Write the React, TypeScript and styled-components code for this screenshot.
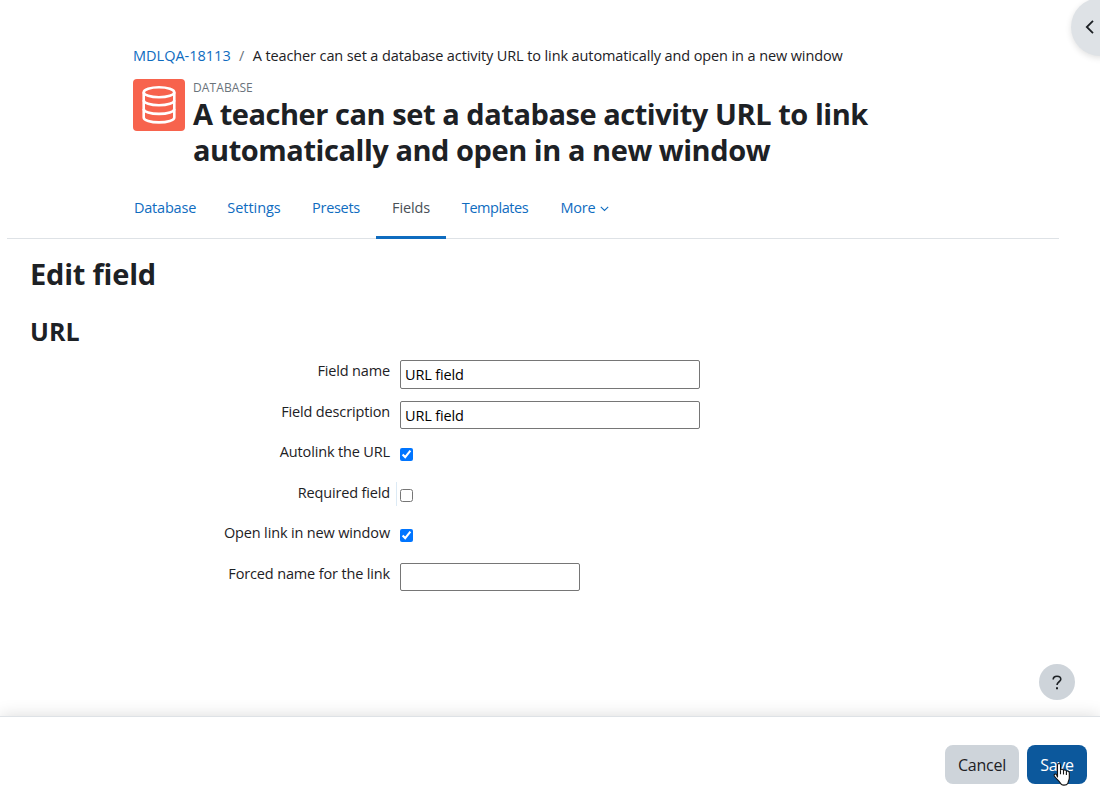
import styled, { createGlobalStyle } from 'styled-components';

const GlobalStyle = createGlobalStyle`
  * {
    box-sizing: border-box;
  }

  body {
    margin: 0;
    background: #fff;
    color: #1d2125;
    font-family: 'Open Sans', 'Noto Sans', sans-serif;
    font-size: 14.5px;
    overflow: hidden;
  }

  a {
    color: #0f6cbf;
    text-decoration: none;
  }
`;

const Page = styled.div`
  position: relative;
  display: flex;
  flex-direction: column;
  width: 1100px;
  height: 804px;
  overflow: hidden;
`;

const Header = styled.header`
  padding: 44px 0 0 133px;
`;

const Breadcrumb = styled.nav`
  display: flex;
  height: 24px;
  line-height: 24px;
  white-space: nowrap;
`;

const Crumb = styled.span<{ $spacing: number }>`
  letter-spacing: ${({ $spacing }) => $spacing}px;
`;

const Separator = styled.span`
  width: 22px;
  color: #6a737b;
  text-align: center;
`;

const Activity = styled.div`
  display: flex;
  gap: 8px;
  margin-top: 11px;
`;

const ActivityIcon = styled.div`
  display: grid;
  place-items: center;
  width: 52px;
  height: 52px;
  border-radius: 4px;
  background: #f7634d;
`;

const ActivityType = styled.div`
  height: 17px;
  color: #6a737b;
  font-size: 12px;
  line-height: 17px;
  letter-spacing: 0.1px;
`;

const Title = styled.h1`
  width: 720px;
  margin: 0;
  font-size: 29px;
  font-weight: 700;
  line-height: 36px;
  letter-spacing: -0.45px;
  white-space: nowrap;
`;

const Tabs = styled.nav`
  display: flex;
  width: 1052px;
  height: 63px;
  margin: 8px 0 0 7px;
  padding-left: 111px;
  border-bottom: 1px solid #dee2e6;
`;

const Tab = styled.a<{ $width: number; $spacing?: number; $active?: boolean }>`
  display: flex;
  justify-content: center;
  gap: 4px;
  width: ${({ $width }) => $width}px;
  height: 63px;
  padding-top: 20px;
  border-bottom: 3px solid ${({ $active }) => ($active ? '#0f6cbf' : 'transparent')};
  color: ${({ $active }) => ($active ? '#495057' : '#0f6cbf')};
  line-height: 24px;
  letter-spacing: ${({ $spacing = -0.15 }) => $spacing}px;

  svg {
    margin-top: 10px;
  }
`;

const Main = styled.main`
  flex: 1;
  padding: 17px 0 0 30px;
`;

const PageHeading = styled.h2`
  margin: 0;
  font-size: 29px;
  line-height: 36px;
  letter-spacing: -0.2px;
`;

const SectionHeading = styled.h3`
  margin: 23px 0 0;
  font-size: 25px;
  line-height: 32px;
  letter-spacing: 0;
`;

const Form = styled.form`
  display: grid;
  grid-auto-rows: 40.5px;
  margin-top: 13px;
`;

const FormRow = styled.div`
  display: grid;
  grid-template-columns: 360px 1fr;
  column-gap: 10px;
`;

const Label = styled.label`
  height: 22px;
  line-height: 22px;
  text-align: right;
  letter-spacing: -0.15px;
`;

const TextInput = styled.input<{ $width: number }>`
  width: ${({ $width }) => $width}px;
  height: 28.5px;
  padding: 1.5px 4px 1px;
  border: 1px solid #767676;
  border-radius: 2px;
  outline: none;
  background: #fff;
  color: #000;
  font: inherit;
  letter-spacing: -0.15px;
`;

const Checkbox = styled.input`
  width: 13px;
  height: 13px;
  margin: 7px 0 0;
`;

const CheckboxCell = styled.div<{ $marked?: boolean }>`
  height: 24px;
  margin-left: -4px;
  padding-left: 3px;
  border-left: 1px solid ${({ $marked }) => ($marked ? '#dceaf5' : 'transparent')};
  line-height: 0;
`;

const Footer = styled.footer`
  display: flex;
  justify-content: flex-end;
  gap: 8px;
  height: 88px;
  padding: 28px 13px 0 0;
  border-top: 1px solid #dee2e6;
  background: #fff;
  box-shadow: 0 0 16px rgba(0, 0, 0, 0.15);
`;

const Button = styled.button<{ $primary?: boolean }>`
  width: ${({ $primary }) => ($primary ? 60 : 74)}px;
  height: 39px;
  padding: 1px 0 0;
  border: 0;
  border-radius: 8px;
  background: ${({ $primary }) => ($primary ? '#0c589c' : '#ced4da')};
  color: ${({ $primary }) => ($primary ? '#fff' : '#1d2125')};
  font: inherit;
  font-size: 16px;
  letter-spacing: -0.25px;
`;

const DrawerToggle = styled.button`
  position: absolute;
  top: -2px;
  right: -29px;
  width: 58px;
  height: 58px;
  padding: 2px 0 0 14px;
  border: 0;
  border-radius: 50%;
  background: #dee2e6;
  box-shadow: 0 2px 6px rgba(0, 0, 0, 0.12);
  text-align: left;
`;

const HelpButton = styled.button`
  position: absolute;
  top: 664px;
  right: 25px;
  display: grid;
  place-items: center;
  width: 36px;
  height: 36px;
  padding: 0;
  border: 0;
  border-radius: 50%;
  background: #ced4da;
`;

const Cursor = styled.svg`
  position: absolute;
  top: 762px;
  left: 1052px;
`;

const tabs = [
  { name: 'Database', width: 94, spacing: -0.2 },
  { name: 'Settings', width: 84, spacing: -0.05 },
  { name: 'Presets', width: 80, spacing: -0.3 },
  { name: 'Fields', width: 70, spacing: -0.15, active: true },
  { name: 'Templates', width: 98, spacing: -0.45 },
];

const DatabaseIcon = () => (
  <svg width="36" height="40" viewBox="0 0 36 40" fill="none" stroke="#fff" strokeWidth="2.6">
    <ellipse cx="18" cy="7.2" rx="15.3" ry="5" />
    <path d="M2.7 7.2v25.2c0 2.8 6.8 5 15.3 5s15.3-2.2 15.3-5V7.2" />
    <path d="M2.7 15.2c0 2.8 6.8 5 15.3 5s15.3-2.2 15.3-5M2.7 23.9c0 2.8 6.8 5 15.3 5s15.3-2.2 15.3-5" />
  </svg>
);

export default function App() {
  return (
    <>
      <GlobalStyle />
      <Page>
        <Header>
          <Breadcrumb>
            <Crumb as="a" href="#" $spacing={0}>MDLQA-18113</Crumb>
            <Separator>/</Separator>
            <Crumb $spacing={-0.11}>
              A teacher can set a database activity URL to link automatically and open in a new window
            </Crumb>
          </Breadcrumb>
          <Activity>
            <ActivityIcon>
              <DatabaseIcon />
            </ActivityIcon>
            <div>
              <ActivityType>DATABASE</ActivityType>
              <Title>
                A teacher can set a database activity URL to link
                <br />
                automatically and open in a new window
              </Title>
            </div>
          </Activity>
        </Header>
        <Tabs>
          {tabs.map(({ name, width, spacing, active }) => (
            <Tab href="#" key={name} $width={width} $spacing={spacing} $active={active}>
              {name}
            </Tab>
          ))}
          <Tab href="#" $width={81}>
            More
            <svg width="9" height="6" viewBox="0 0 9 6" fill="none" stroke="currentColor" strokeWidth="1.1">
              <path d="M.8.8l3.7 3.7L8.2.8" />
            </svg>
          </Tab>
        </Tabs>
        <Main>
          <PageHeading>Edit field</PageHeading>
          <SectionHeading>URL</SectionHeading>
          <Form>
            <FormRow>
              <Label htmlFor="name">Field name</Label>
              <TextInput id="name" defaultValue="URL field" $width={300} />
            </FormRow>
            <FormRow>
              <Label htmlFor="description">Field description</Label>
              <TextInput id="description" defaultValue="URL field" $width={300} />
            </FormRow>
            <FormRow>
              <Label htmlFor="autolink">Autolink the URL</Label>
              <CheckboxCell>
                <Checkbox id="autolink" type="checkbox" defaultChecked />
              </CheckboxCell>
            </FormRow>
            <FormRow>
              <Label htmlFor="required">Required field</Label>
              <CheckboxCell $marked>
                <Checkbox id="required" type="checkbox" />
              </CheckboxCell>
            </FormRow>
            <FormRow>
              <Label htmlFor="newwindow">Open link in new window</Label>
              <CheckboxCell>
                <Checkbox id="newwindow" type="checkbox" defaultChecked />
              </CheckboxCell>
            </FormRow>
            <FormRow>
              <Label htmlFor="forced">Forced name for the link</Label>
              <TextInput id="forced" $width={180} />
            </FormRow>
          </Form>
        </Main>
        <Footer>
          <Button>Cancel</Button>
          <Button $primary>Save</Button>
        </Footer>
        <DrawerToggle aria-label="Open block drawer">
          <svg width="9" height="14" viewBox="0 0 9 14" fill="none" stroke="#1d2125" strokeWidth="1.8">
            <path d="M8 .8L1.8 7 8 13.2" />
          </svg>
        </DrawerToggle>
        <HelpButton aria-label="Help">
          <svg width="10" height="15" viewBox="0 0 10 15" fill="none" stroke="#1d2125" strokeWidth="1.6">
            <path d="M1.2 4.6C1.2 2.4 2.8 1.2 5 1.2s3.8 1.2 3.8 3.1C8.8 6.700 5 6.900 5 10" />
            <path d="M5 12.2v2" strokeWidth="2" />
          </svg>
        </HelpButton>
        <Cursor width="20" height="26" viewBox="0 0 20 26" fill="#fff" stroke="#111" strokeWidth="1.1" strokeLinejoin="round">
          <path d="M5.5 15V3.2C5.5.9 8.5.9 8.5 3.2v5c.3-1.4 3-1.2 3 .5.4-1.2 2.9-.9 2.9.9.5-1.1 2.900-.6 2.900 1.3V16c0 2-1.3 3.3-1.3 5.2-1.5 2.600-6.800 2.600-7.500 0C7.500 19 3.800 16.500 2.300 14c-.8-1.600 1-2.600 2.200-1.400z" />
          <path d="M8.5 8.5v3.8M11.5 9v3.6M14.4 10v3" />
        </Cursor>
      </Page>
    </>
  );
}
